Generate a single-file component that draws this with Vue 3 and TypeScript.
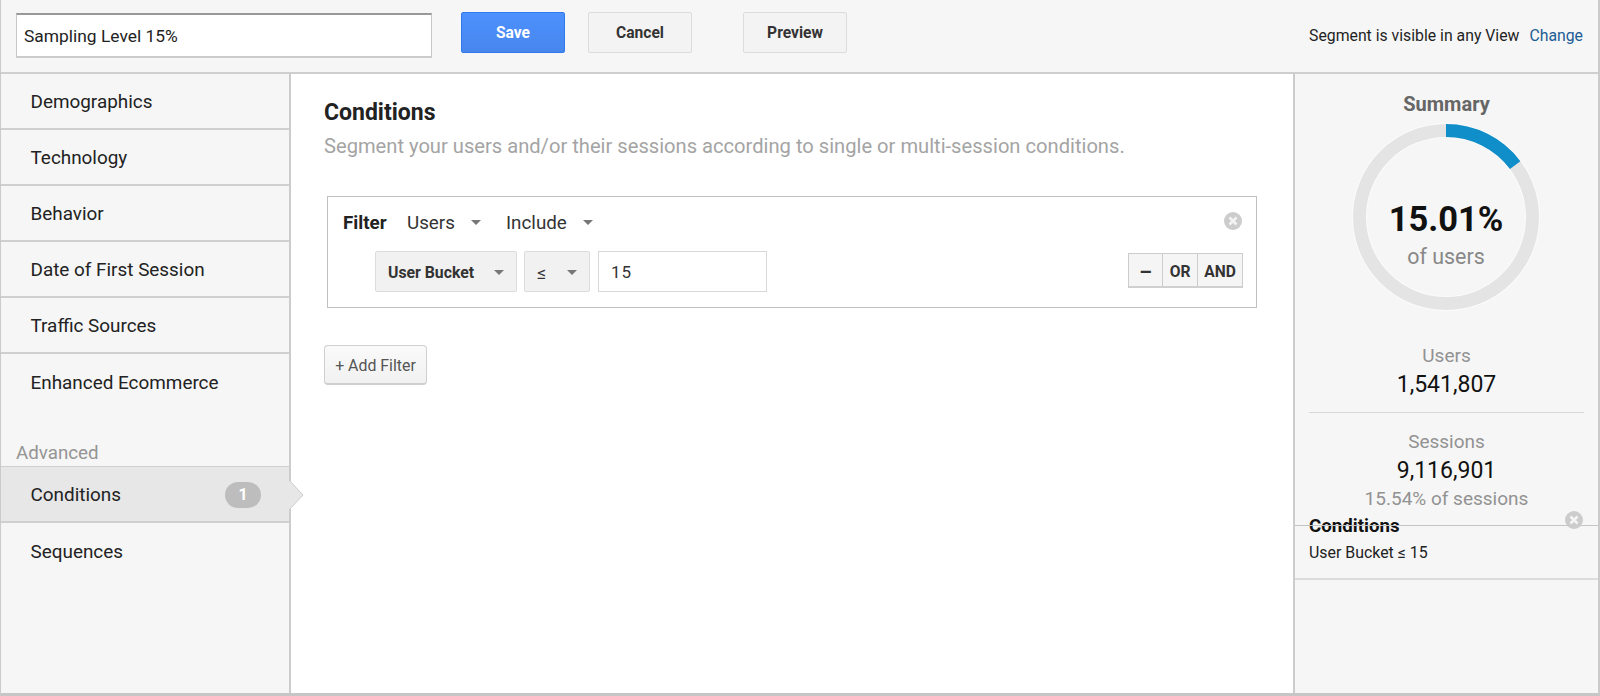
<script setup lang="ts">
const topItems = ['Demographics', 'Technology', 'Behavior', 'Date of First Session', 'Traffic Sources', 'Enhanced Ecommerce']
</script>

<template>
  <div class="page">
    <header class="toolbar">
      <input class="name-input" value="Sampling Level 15%" />
      <button class="btn btn--save" type="button">Save</button>
      <button class="btn btn--cancel" type="button">Cancel</button>
      <button class="btn btn--preview" type="button">Preview</button>
      <div class="visibility">
        <span>Segment is visible in any View</span>
        <a class="change">Change</a>
      </div>
    </header>

    <div class="body">
      <nav class="sidebar">
        <div v-for="item in topItems" :key="item" class="nav-item">{{ item }}</div>
        <div class="nav-heading">Advanced</div>
        <div class="nav-item nav-item--active">
          Conditions
          <span class="badge">1</span>
          <svg class="pointer" width="15" height="32" viewBox="0 0 15 32">
            <path d="M0 1 L14 16 L0 31" fill="#e7e7e7" stroke="#cccccc" stroke-width="1" />
          </svg>
        </div>
        <div class="nav-item nav-item--last">Sequences</div>
      </nav>

      <main class="content">
        <h1 class="title">Conditions</h1>
        <p class="subtitle">Segment your users and/or their sessions according to single or multi-session conditions.</p>

        <section class="filter">
          <div class="filter-head">
            <strong class="filter-label">Filter</strong>
            <span class="plain-select plain-select--users">Users<i class="caret"></i></span>
            <span class="plain-select">Include<i class="caret"></i></span>
            <svg class="close close--filter" width="18" height="18" viewBox="0 0 18 18">
              <circle cx="9" cy="9" r="9" fill="#cccccc" />
              <path d="M5.5 5.5 L12.5 12.5 M12.5 5.5 L5.5 12.5" stroke="#f4f4f4" stroke-width="2.6" />
            </svg>
          </div>
          <div class="filter-row">
            <span class="select select--field">User Bucket<i class="caret"></i></span>
            <span class="select select--op">≤<i class="caret"></i></span>
            <input class="value-input" value="15" />
            <div class="logic">
              <span class="logic-btn logic-btn--minus">–</span>
              <span class="logic-btn logic-btn--or">OR</span>
              <span class="logic-btn logic-btn--and">AND</span>
            </div>
          </div>
        </section>

        <button class="add-filter" type="button">+ Add Filter</button>
      </main>

      <aside class="summary">
        <h2 class="summary-title">Summary</h2>
        <div class="donut">
          <svg width="188" height="188" viewBox="0 0 188 188">
            <circle cx="94" cy="94" r="86.5" fill="none" stroke="#fbfbfb" stroke-width="15" />
            <circle cx="94" cy="94" r="86.5" fill="none" stroke="#e4e4e4" stroke-width="13" />
            <circle
              cx="94"
              cy="94"
              r="86.5"
              fill="none"
              stroke="#0f8ec9"
              stroke-width="13"
              stroke-dasharray="80 464"
              transform="rotate(-90 94 94)"
            />
          </svg>
          <div class="donut-text">
            <div class="donut-value">15.01%</div>
            <div class="donut-label">of users</div>
          </div>
        </div>

        <div class="stat stat--users">
          <div class="stat-label">Users</div>
          <div class="stat-value">1,541,807</div>
        </div>
        <div class="stat stat--sessions">
          <div class="stat-label">Sessions</div>
          <div class="stat-value">9,116,901</div>
          <div class="stat-label stat-label--sub">15.54% of sessions</div>
        </div>

        <div class="cond">
          <div class="cond-title">Conditions</div>
          <div class="cond-text">User Bucket ≤ 15</div>
          <svg class="close close--cond" width="18" height="18" viewBox="0 0 18 18">
            <circle cx="9" cy="9" r="9" fill="#cccccc" />
            <path d="M5.5 5.5 L12.5 12.5 M12.5 5.5 L5.5 12.5" stroke="#f4f4f4" stroke-width="2.6" />
          </svg>
        </div>
      </aside>
    </div>
  </div>
</template>

<style>
html,
body {
  margin: 0;
  background: #fff;
}
</style>

<style scoped>
.page {
  width: 1600px;
  height: 696px;
  box-sizing: border-box;
  display: flex;
  flex-direction: column;
  font-family: Roboto, "Liberation Sans", sans-serif;
  color: #222;
  border-left: 1px solid #cbcbcb;
  border-right: 2px solid #cbcbcb;
  border-bottom: 3px solid #c6c6c6;
  overflow: hidden;
}

.toolbar {
  height: 74px;
  flex: none;
  box-sizing: border-box;
  display: flex;
  align-items: flex-start;
  background: #f6f6f6;
  border-bottom: 2px solid #cfcfcf;
  padding: 12px 0 0 15px;
}

.name-input {
  width: 416px;
  height: 45px;
  box-sizing: border-box;
  margin-top: 1px;
  padding: 1px 7px 0;
  font: 400 17.4px Roboto, sans-serif;
  color: #222;
  background: #fff;
  border: 1px solid #c8c8c8;
  border-top: 2px solid #999;
  border-bottom: 2px solid #ccc;
  border-radius: 0;
  outline: none;
}

.btn {
  width: 104px;
  height: 41px;
  padding: 0;
  font: 700 15.6px Roboto, sans-serif;
  color: #333;
  background: #f3f3f3;
  border: 1px solid #dcdcdc;
  border-radius: 2px;
}

.btn--save {
  margin-left: 29px;
  color: #fff;
  background: linear-gradient(#4d90fe, #4787ed);
  border-color: #3079ed;
}

.btn--cancel {
  margin-left: 23px;
}

.btn--preview {
  margin-left: 51px;
}

.visibility {
  margin-left: auto;
  margin-right: 15px;
  margin-top: 13px;
  font-size: 15.8px;
  line-height: 22px;
  color: #1f1f1f;
  display: flex;
  gap: 10px;
}

.change {
  color: #1c5c94;
}

.body {
  flex: 1;
  display: flex;
  min-height: 0;
}

.sidebar {
  width: 288px;
  flex: none;
  background: #f6f6f6;
  border-right: 2px solid #cccccc;
  position: relative;
}

.nav-item {
  height: 56px;
  box-sizing: border-box;
  padding: 1px 0 0 29.5px;
  display: flex;
  align-items: center;
  font-size: 18.9px;
  color: #222;
  border-bottom: 2px solid #cfcfcf;
  position: relative;
}

.nav-item:nth-child(6) {
  border-bottom: none;
}

.nav-heading {
  height: 57px;
  box-sizing: border-box;
  padding: 31px 0 0 15px;
  font-size: 18.75px;
  line-height: 24px;
  color: #949494;
  border-bottom: 1px solid #cfcfcf;
}

.nav-item--active {
  background: #e7e7e7;
}

.nav-item--last {
  border-bottom: none;
}

.badge {
  position: absolute;
  left: 224px;
  top: 15px;
  width: 36px;
  height: 26px;
  border-radius: 13px;
  background: #bdbdbd;
  color: #fff;
  font-size: 16px;
  font-weight: 700;
  text-align: center;
  line-height: 26px;
}

.pointer {
  position: absolute;
  left: 288px;
  top: 12px;
}

.content {
  flex: 1;
  min-width: 0;
  background: #fff;
  padding: 25px 0 0 33px;
  box-sizing: border-box;
}

.title {
  margin: 0;
  font-size: 23px;
  line-height: 28px;
  font-weight: 700;
  color: #222;
}

.subtitle {
  margin: 6px 0 0;
  font-size: 20.15px;
  line-height: 26px;
  color: #a4a4a4;
}

.filter {
  margin: 37px 0 0 3px;
  width: 930px;
  height: 112px;
  box-sizing: border-box;
  border: 1px solid #c0c0c0;
  padding: 0 13px 0 15px;
}

.filter-head {
  height: 54px;
  box-sizing: border-box;
  padding-bottom: 3px;
  display: flex;
  align-items: center;
  position: relative;
  font-size: 18.8px;
}

.filter-label {
  font-size: 18.8px;
  font-weight: 700;
  width: 64px;
}

.plain-select {
  display: inline-flex;
  align-items: center;
  color: #333;
}

.plain-select--users {
  width: 99px;
}

.caret {
  display: inline-block;
  width: 0;
  height: 0;
  margin-left: 16px;
  border-left: 5.5px solid transparent;
  border-right: 5.5px solid transparent;
  border-top: 5.5px solid #777;
}

.close--filter {
  position: absolute;
  right: 1px;
  top: 15px;
}

.filter-row {
  display: flex;
  align-items: flex-start;
  padding-left: 32px;
}

.select {
  height: 41px;
  box-sizing: border-box;
  display: flex;
  align-items: center;
  padding-top: 1px;
  background: #f1f1f1;
  border: 1px solid #dcdcdc;
  border-radius: 2px;
  color: #333;
}

.select--field {
  width: 142px;
  padding-left: 12px;
  font-size: 15.8px;
  font-weight: 700;
}

.select--op {
  width: 66px;
  margin-left: 7px;
  padding-left: 12px;
  font-size: 18px;
}

.select--field .caret {
  margin-left: 20px;
}

.select--op .caret {
  margin-left: 21px;
}

.value-input {
  width: 169px;
  height: 41px;
  box-sizing: border-box;
  margin-left: 8px;
  padding: 1px 12px 0;
  font: 400 17px Roboto, sans-serif;
  letter-spacing: 1px;
  color: #333;
  background: #fff;
  border: 1px solid #d8d8d8;
  outline: none;
}

.logic {
  margin-left: auto;
  margin-top: 2px;
  display: flex;
  height: 35px;
  box-sizing: border-box;
  border: 1px solid #cccccc;
  border-bottom: 2px solid #d0d0d0;
  background: #f5f5f5;
  font-size: 15.6px;
  font-weight: 700;
  color: #333;
}

.logic-btn {
  display: flex;
  align-items: center;
  justify-content: center;
  padding-top: 4px;
  border-left: 1px solid #cccccc;
}

.logic-btn--minus {
  width: 33px;
  border-left: none;
  font-size: 20px;
}

.logic-btn--or {
  width: 34px;
}

.logic-btn--and {
  width: 44px;
}

.add-filter {
  display: block;
  margin-top: 37px;
  width: 103px;
  height: 40px;
  padding: 2px 0 0;
  font: 400 15.9px Roboto, sans-serif;
  color: #555;
  background: linear-gradient(#fafafa, #f1f1f1);
  border: 1px solid #cfcfcf;
  border-bottom-width: 2px;
  border-radius: 4px;
}

.summary {
  width: 305px;
  flex: none;
  box-sizing: border-box;
  background: #f6f6f6;
  border-left: 2px solid #cccccc;
  text-align: center;
  position: relative;
}

.summary-title {
  margin: 18px 0 0;
  font-size: 20px;
  line-height: 24px;
  font-weight: 700;
  color: #666;
}

.donut {
  position: relative;
  width: 188px;
  height: 188px;
  margin: 7px 0 0 57px;
}

.donut svg {
  display: block;
}

.donut-text {
  position: absolute;
  inset: 0;
  display: flex;
  flex-direction: column;
  align-items: center;
  padding-top: 76px;
  box-sizing: border-box;
}

.donut-value {
  font-size: 34.5px;
  line-height: 40px;
  font-weight: 700;
  color: #111;
}

.donut-label {
  font-size: 21.4px;
  line-height: 26px;
  margin-top: 5px;
  color: #888;
}

.stat-label {
  font-size: 19px;
  line-height: 24px;
  color: #929292;
}

.stat-value {
  font-size: 23px;
  line-height: 34px;
  color: #111;
}

.stat--users {
  margin: 33px 14px 0;
  padding-bottom: 10px;
  border-bottom: 1px solid #d8d8d8;
}

.stat--sessions {
  margin: 17px 14px 0;
}

.stat-label--sub {
  margin-top: -1px;
}

.cond {
  position: absolute;
  left: 0;
  right: 0;
  top: 451px;
  height: 55px;
  box-sizing: border-box;
  border-bottom: 2px solid #dcdcdc;
  text-align: left;
  padding-left: 14px;
}

/* the line runs over the title, same as the original page */
.cond::before {
  content: '';
  position: absolute;
  left: 0;
  right: 0;
  top: 0;
  height: 1px;
  background: #c4c4c4;
  z-index: 1;
}

.cond-title {
  margin-top: -10px;
  font-size: 18.7px;
  line-height: 22px;
  font-weight: 700;
  color: #111;
}

.cond-text {
  margin-top: 6px;
  font-size: 15.9px;
  line-height: 20px;
  color: #222;
}

.close--cond {
  position: absolute;
  right: 15px;
  top: -14px;
  z-index: 2;
}
</style>
